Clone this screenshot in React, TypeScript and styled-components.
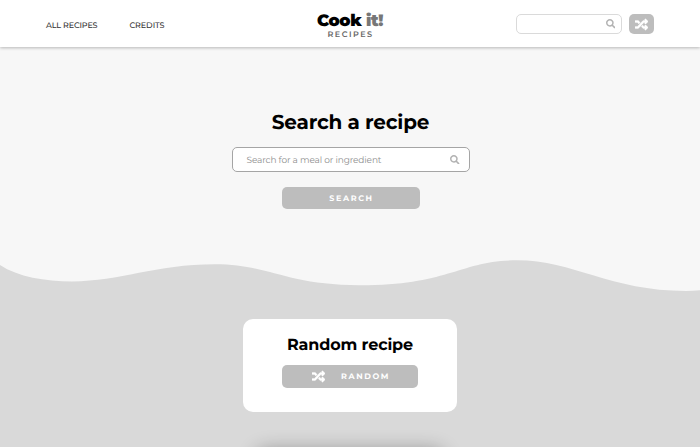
import React from "react";
import styled, { createGlobalStyle } from "styled-components";
import { FaRandom, FaSearch } from "react-icons/fa";

const GlobalStyle = createGlobalStyle`
  * { box-sizing: border-box; }
  body {
    margin: 0;
    overflow: hidden;
    font-family: Montserrat, Inter, "Liberation Sans", sans-serif;
    background: #f7f7f7;
    text-rendering: geometricPrecision;
  }
`;

const Page = styled.div`
  display: flex;
  flex-direction: column;
  height: 447px;
  overflow: hidden;
`;

const Header = styled.header`
  display: grid;
  grid-template-columns: 1fr 80px 1fr;
  flex: none;
  height: 47px;
  background: #fff;
  box-shadow: 0 1px 3px rgba(0, 0, 0, 0.26);
  z-index: 1;
`;

const Nav = styled.nav`
  display: flex;
  align-items: center;
  gap: 32px;
  padding: 4px 0 0 46px;
`;

const NavLink = styled.a<{ $spacing: string }>`
  font-size: 8px;
  line-height: 12px;
  font-weight: 500;
  letter-spacing: ${(p) => p.$spacing};
  color: #333;
  white-space: nowrap;
`;

const Logo = styled.div`
  display: flex;
  flex-direction: column;
  align-items: center;
  padding-top: 12px;
`;

const LogoName = styled.div`
  font-size: 16.5px;
  line-height: 18px;
  font-weight: 900;
  letter-spacing: -0.36px;
  white-space: nowrap;
`;

const LogoAccent = styled.span`
  color: #777;
`;

const LogoCaption = styled.div`
  padding-left: 1px;
  font-size: 8px;
  line-height: 10px;
  font-weight: 600;
  letter-spacing: 1.5px;
  color: #666;
`;

const Tools = styled.div`
  display: flex;
  justify-content: flex-end;
  gap: 7px;
  padding: 14px 46px 0 0;
`;

const SearchField = styled.div<{ $large?: boolean }>`
  display: flex;
  align-items: center;
  justify-content: space-between;
  width: ${(p) => (p.$large ? "238px" : "106px")};
  height: ${(p) => (p.$large ? "25px" : "20px")};
  padding: ${(p) => (p.$large ? "0 9px 0 14px" : "0 6px 0 8px")};
  border: 1px solid ${(p) => (p.$large ? "#a5a5a5" : "#dadada")};
  border-radius: 5px;
  background: #fff;
  color: #b2b2b2;
  font-size: 9.5px;
`;

const Placeholder = styled.span`
  padding-top: 2px;
  font-weight: 400;
  font-size: 9px;
  letter-spacing: -0.14px;
  color: #8f8f8f;
  white-space: nowrap;
`;

const ShuffleIcon = styled(FaRandom)`
  flex: none;
  font-size: 13px;
  stroke: currentColor;
  stroke-width: 14px;
`;

const ShuffleButton = styled.button`
  display: flex;
  align-items: center;
  justify-content: center;
  width: 25px;
  height: 20px;
  padding: 0;
  border: 0;
  border-radius: 5px;
  background: #bdbdbd;
  color: #fff;
`;

const Hero = styled.section`
  display: flex;
  flex-direction: column;
  align-items: center;
  flex: none;
  height: 208px;
  padding: 63px 0 0 1px;
  background: #f7f7f7;
`;

const Title = styled.h1`
  margin: 0 0 10px;
  font-size: 20px;
  line-height: 27px;
  font-weight: 700;
  letter-spacing: -0.2px;
  white-space: nowrap;
`;

const ActionButton = styled.button<{ $width: number; $height: number }>`
  display: flex;
  align-items: center;
  justify-content: center;
  gap: 16px;
  width: ${(p) => p.$width}px;
  height: ${(p) => p.$height}px;
  padding: 0 0 0 2px;
  border: 0;
  border-radius: 5px;
  background: #bdbdbd;
  color: #fff;
  font-family: inherit;
  font-size: 8px;
  font-weight: 700;
  letter-spacing: 1.6px;
  text-rendering: inherit;
`;

const ButtonLabel = styled.span`
  padding-top: 1px;
`;

const HeroAction = styled.div`
  margin-top: 15px;
`;

const Wave = styled.svg`
  display: block;
  flex: none;
  width: 700px;
  height: 40px;
  background: #f7f7f7;
`;

const Suggestions = styled.section`
  display: flex;
  flex-direction: column;
  align-items: center;
  flex: none;
  gap: 38px;
  height: 152px;
  padding-top: 24px;
  overflow: hidden;
  background: #d9d9d9;
`;

const RandomCard = styled.div`
  display: flex;
  flex-direction: column;
  align-items: center;
  flex: none;
  width: 214px;
  height: 93px;
  padding-top: 16px;
  border-radius: 10px;
  background: #fff;
`;

const CardTitle = styled.h2`
  margin: 0 0 9px;
  font-size: 16px;
  line-height: 21px;
  font-weight: 700;
  letter-spacing: -0.15px;
  white-space: nowrap;
`;

const RecipeCard = styled.div`
  flex: none;
  width: 188px;
  height: 120px;
  border-radius: 10px;
  background: #fff;
  box-shadow: 0 0 19px rgba(0, 0, 0, 0.32);
`;

export default function App() {
  return (
    <>
      <GlobalStyle />
      <Page>
        <Header>
          <Nav>
            <NavLink $spacing="-0.13px">ALL RECIPES</NavLink>
            <NavLink $spacing="-0.08px">CREDITS</NavLink>
          </Nav>
          <Logo>
            <LogoName>
              Cook <LogoAccent>it!</LogoAccent>
            </LogoName>
            <LogoCaption>RECIPES</LogoCaption>
          </Logo>
          <Tools>
            <SearchField>
              <span />
              <FaSearch />
            </SearchField>
            <ShuffleButton aria-label="Random recipe">
              <ShuffleIcon />
            </ShuffleButton>
          </Tools>
        </Header>
        <Hero>
          <Title>Search a recipe</Title>
          <SearchField $large>
            <Placeholder>Search for a meal or ingredient</Placeholder>
            <FaSearch />
          </SearchField>
          <HeroAction>
            <ActionButton $width={138} $height={22}>
              <ButtonLabel>SEARCH</ButtonLabel>
            </ActionButton>
          </HeroAction>
        </Hero>
        <Wave viewBox="0 0 700 40" aria-hidden="true">
          <path
            fill="#d9d9d9"
            d="M0 10C18 22 45 26.4 72 26.4C120 26.4 155 9.3 215 9.3C270 9.3 285 30.2 360 30.2C450 30.2 460 5.3 517 5.3C573 5.3 610 36 686 36Q693 36 700 35.3V40H0Z"
          />
        </Wave>
        <Suggestions>
          <RandomCard>
            <CardTitle>Random recipe</CardTitle>
            <ActionButton $width={136} $height={23}>
              <ShuffleIcon />
              <ButtonLabel>RANDOM</ButtonLabel>
            </ActionButton>
          </RandomCard>
          <RecipeCard />
        </Suggestions>
      </Page>
    </>
  );
}
